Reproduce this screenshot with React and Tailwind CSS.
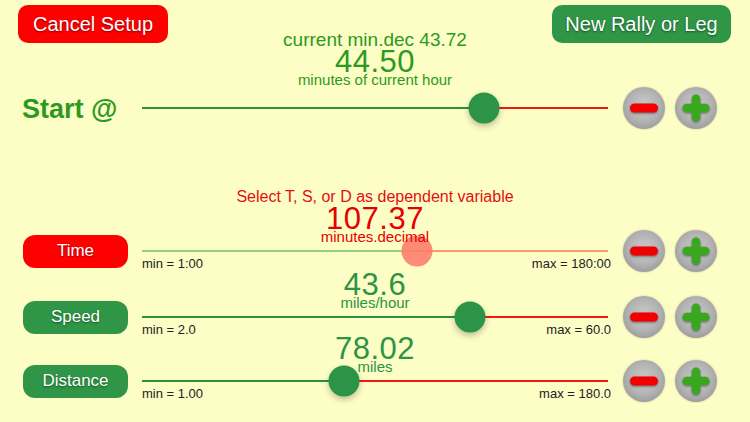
const rows = [
  {
    label: "Time",
    btn: "bg-[#ff0000]",
    title: "Select T, S, or D as dependent variable",
    titleBox: "mt-[59px]",
    numBox: "mt-[0px]",
    value: "107.37",
    unit: "minutes.decimal",
    color: "text-[#e60000]",
    pos: 275,
    left: "bg-[#97cf82]",
    right: "bg-[#f59b70]",
    thumb: "bg-[#ff7d6b] opacity-90",
    min: "min = 1:00",
    max: "max = 180:00",
  },
  {
    label: "Speed",
    btn: "bg-[#2e9646]",
    numBox: "mt-[1px]",
    value: "43.6",
    unit: "miles/hour",
    color: "text-[#2b9445]",
    pos: 328,
    left: "bg-[#2b9040]",
    right: "bg-[#f01a14]",
    thumb: "bg-[#2b9446] shadow-[0_3px_6px_rgba(0,0,0,0.25)]",
    min: "min = 2.0",
    max: "max = 60.0",
  },
  {
    label: "Distance",
    btn: "bg-[#2e9646]",
    numBox: "-mt-[1px]",
    value: "78.02",
    unit: "miles",
    color: "text-[#2b9445]",
    pos: 202,
    left: "bg-[#2b9040]",
    right: "bg-[#f01a14]",
    thumb: "bg-[#2b9446] shadow-[0_3px_6px_rgba(0,0,0,0.25)]",
    min: "min = 1.00",
    max: "max = 180.0",
  },
];

function RoundBtn({ children }) {
  return (
    <div className="flex h-[42px] w-[42px] items-center justify-center rounded-full bg-[radial-gradient(circle_at_50%_45%,#cacaca_0%,#b3b3b3_50%,#8e8e8e_92%,#c4c4c4_100%)] shadow-[0_0_2px_rgba(0,0,0,0.25)]">
      {children}
    </div>
  );
}

function StepButtons() {
  return (
    <div className="ml-[15px] flex gap-[10px]">
      <RoundBtn>
        <svg width="30" height="12" viewBox="0 0 30 12" className="drop-shadow-[0_1px_1px_rgba(0,0,0,0.45)]">
          <rect x="1" y="1.5" width="28" height="9" rx="4.5" fill="#f20000" />
        </svg>
      </RoundBtn>
      <RoundBtn>
        <svg width="28" height="28" viewBox="0 0 28 28" className="drop-shadow-[0_1px_1px_rgba(0,0,0,0.45)]">
          <rect x="9.75" y="0.5" width="8.5" height="27" rx="4.25" fill="#3aa81e" />
          <rect x="0.5" y="9.75" width="27" height="8.5" rx="4.25" fill="#3aa81e" />
        </svg>
      </RoundBtn>
    </div>
  );
}

function Track({ pos, left, right, thumb }) {
  return (
    <div className="relative flex h-full w-[466px] items-center">
      <div className={`h-[2px] ${left}`} style={{ width: pos }} />
      <div className={`h-[2px] flex-1 ${right}`} />
      <div
        className={`absolute top-1/2 h-[31px] w-[31px] -translate-x-1/2 -translate-y-1/2 rounded-full ${thumb}`}
        style={{ left: pos }}
      />
    </div>
  );
}

function ValueRow({ row }) {
  return (
    <>
      <div className="relative z-10 ml-[142px] w-[466px] text-center">
        {row.title && (
          <div className={`${row.titleBox} text-[16px] leading-[18px] text-[#e31010]`}>{row.title}</div>
        )}
        <div className={`${row.numBox} text-[31px] leading-[26px] tracking-[0.5px] ${row.color}`}>{row.value}</div>
        <div className={`-mt-[2px] text-[15px] leading-[14px] ${row.color}`}>{row.unit}</div>
      </div>
      <div className="-mt-[14px] flex h-[42px] items-center">
        <div className="w-[142px] pl-[23px]">
          <div
            className={`flex h-[33px] w-[105px] items-center justify-center rounded-[12px] text-[17px] text-white [text-shadow:0_1px_2px_rgba(0,0,0,0.45)] ${row.btn}`}
          >
            {row.label}
          </div>
        </div>
        <Track pos={row.pos} left={row.left} right={row.right} thumb={row.thumb} />
        <StepButtons />
      </div>
      <div className="-mt-[16px] ml-[142px] flex w-[469px] justify-between text-[13px] leading-[15px] text-[#222]">
        <span>{row.min}</span>
        <span>{row.max}</span>
      </div>
    </>
  );
}

export default function App() {
  return (
    <div className="h-[422px] w-[750px] overflow-hidden bg-[#fdfdc6] font-['Liberation_Sans',Arial,sans-serif]">
      {/* header */}
      <div className="flex justify-between pl-[18px] pr-[19px] pt-[5px]">
        <button className="h-[38px] w-[150px] rounded-[10px] bg-[#ff0000] text-[20px] text-white [text-shadow:0_1px_2px_rgba(0,0,0,0.5)]">
          Cancel Setup
        </button>
        <button className="h-[38px] w-[179px] rounded-[10px] bg-[#2e9646] text-[20px] text-white [text-shadow:0_1px_2px_rgba(0,0,0,0.5)]">
          New Rally or Leg
        </button>
      </div>

      {/* start time */}
      <div className="relative z-10 ml-[142px] -mt-[13px] w-[466px] text-center text-[#2c9a1e]">
        <div className="text-[19px] leading-[20px]">current min.dec 43.72</div>
        <div className="-mt-[1px] text-[31px] leading-[26px] tracking-[0.5px]">44.50</div>
        <div className="-mt-[2px] text-[15px] leading-[14px]">minutes of current hour</div>
      </div>
      <div className="flex h-[42px] items-center">
        <div className="mt-[2px] w-[142px] pl-[22px] text-[27px] font-semibold text-[#2c9a1e]">Start @</div>
        <Track
          pos={342}
          left="bg-[#2b9040]"
          right="bg-[#f01a14]"
          thumb="bg-[#2b9446] shadow-[0_3px_6px_rgba(0,0,0,0.25)]"
        />
        <StepButtons />
      </div>

      {rows.map((row) => (
        <ValueRow key={row.label} row={row} />
      ))}
    </div>
  );
}
